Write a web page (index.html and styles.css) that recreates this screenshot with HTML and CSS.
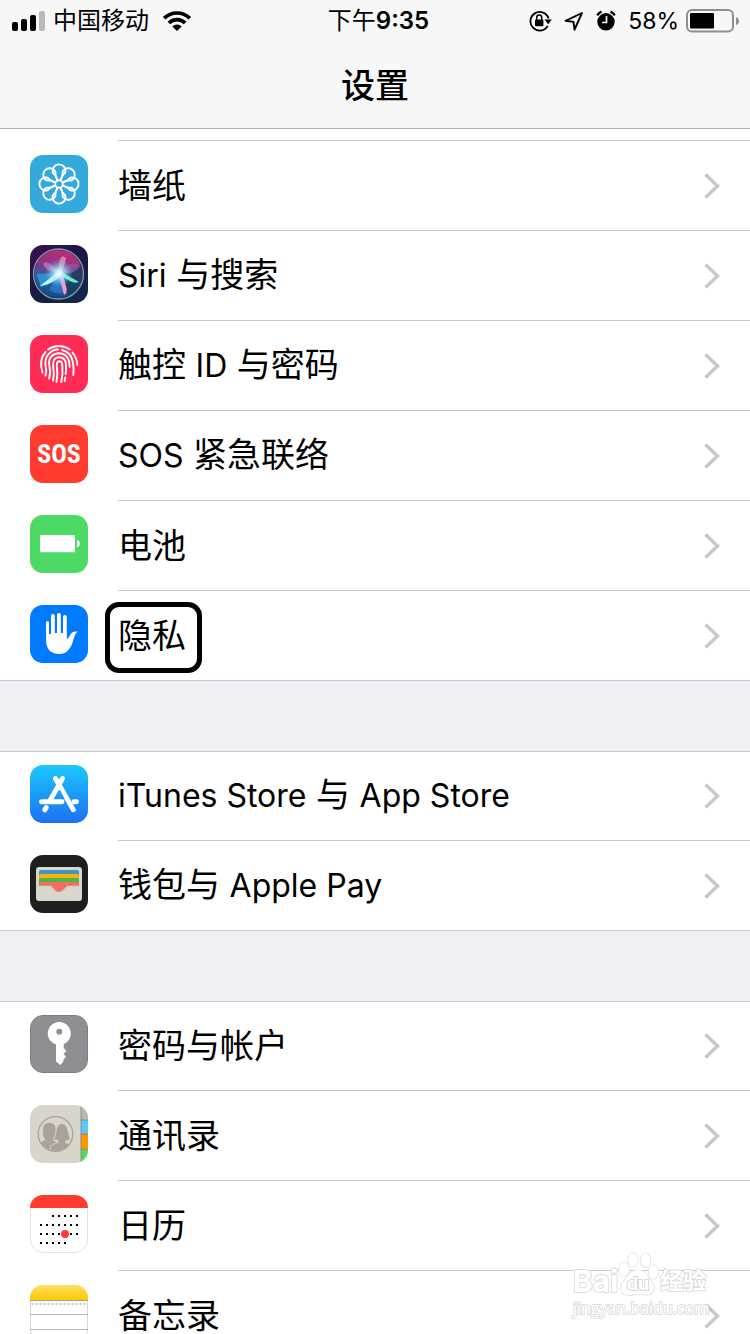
FILE: index.html
```html
<!DOCTYPE html>
<html lang="zh-CN">
<head>
<meta charset="utf-8">
<meta name="viewport" content="width=device-width, initial-scale=1">
<title>设置</title>
<link rel="stylesheet" href="styles.css">
</head>
<body>
<svg class="defs" aria-hidden="true">
  <defs>
    <symbol id="chevron" viewBox="0 0 16 26"><path d="M1.500 1.500 13.500 13 1.500 24.500" fill="none" stroke="#c7c7cc" stroke-width="3.500"/></symbol>
    <path id="petal" d="M-1.600-3.900-3.500-8.400-6.300-11.500A6.500 6.500 0 1 1 6.300-11.500L3.500-8.400 1.600-3.900"/>
  </defs>
</svg>
<div class="screen">
  <header class="header">
    <div class="status">
      <div class="status-side">
        <svg class="signal" width="34" height="22" viewBox="0 0 34 22"><rect x="0" y="12" width="6" height="9" rx="2"/><rect x="9" y="9" width="6" height="12" rx="2"/><rect x="18" y="5" width="6" height="16" rx="2"/><rect x="27" y="1" width="6" height="20" rx="2" fill="#b9b9b9"/></svg>
        <span>中国移动</span>
        <svg class="wifi" width="28" height="22" viewBox="0 0 28 22"><g fill="none" stroke="#000" stroke-width="3.600"><path d="M1.200 8.200a18.200 18.200 0 0 1 25.600 0"/><path d="M5.900 13a11.500 11.500 0 0 1 16.200 0"/></g><path d="M14 21 9.300 16.400a6.700 6.700 0 0 1 9.400 0z"/></svg>
      </div>
      <time class="time">下午<span class="digits">9:35</span></time>
      <div class="status-side status-right">
        <svg width="23" height="22" viewBox="0 0 23 22"><path d="M18.800 15.900A9.300 9.300 0 1 1 19.600 8.500" fill="none" stroke="#000" stroke-width="1.800"/><path d="M15.500 9.500h7.300l-3.600 4.700z"/><rect x="6" y="9.500" width="8.400" height="6.800" rx="1"/><path d="M7.700 10V7.600a2.500 2.500 0 0 1 5 0V10" fill="none" stroke="#000" stroke-width="1.500"/></svg>
        <svg width="20" height="22" viewBox="0 0 20 22"><path d="M18 3 1.500 10.800 9.500 11.900 10.500 19.700z" fill="none" stroke="#000" stroke-width="1.900" stroke-linejoin="round"/></svg>
        <svg width="20" height="22" viewBox="0 0 20 22"><circle cx="10" cy="11.800" r="8.700"/><path d="M1.200 5.300A10 10 0 0 1 5.500 1.600M14.500 1.600a10 10 0 0 1 4.300 3.700" fill="none" stroke="#000" stroke-width="2.400"/><path d="M10.500 6v6.500H6" fill="none" stroke="#f7f7f7" stroke-width="1.700"/></svg>
        <span class="percent">58%</span>
        <svg class="battery" width="53" height="24" viewBox="0 0 53 24"><rect x="1" y="1" width="46" height="21.500" rx="5" fill="none" stroke="#8e8e8e" stroke-width="2"/><rect x="4" y="4" width="24" height="15.500" rx="1"/><path d="M50 8q3 1 3 4t-3 4z" fill="#8e8e8e"/></svg>
      </div>
    </div>
    <h1 class="title">设置</h1>
  </header>
  <main class="list">
    <section class="group group-first">
      <a class="row" href="#"><svg class="icon" viewBox="0 0 58 58"><rect width="58" height="58" rx="13" fill="#34aadc"/><g transform="translate(29 29)" fill="none" stroke="#fff" stroke-width="1.900"><circle r="3.800"/><use href="#petal"/><use href="#petal" transform="rotate(45)"/><use href="#petal" transform="rotate(90)"/><use href="#petal" transform="rotate(135)"/><use href="#petal" transform="rotate(180)"/><use href="#petal" transform="rotate(225)"/><use href="#petal" transform="rotate(270)"/><use href="#petal" transform="rotate(315)"/></g></svg><span class="body"><span class="label">墙纸</span><svg class="chevron"><use href="#chevron"/></svg></span></a>
      <a class="row" href="#"><svg class="icon" viewBox="0 0 58 58">
        <defs>
          <linearGradient id="siriBg" x1="0" y1="0" x2=".7" y2="1"><stop stop-color="#3d0f50"/><stop offset=".5" stop-color="#1d1744"/><stop offset="1" stop-color="#10284a"/></linearGradient>
          <linearGradient id="siriOrb" x1=".6" y1="0" x2=".35" y2="1"><stop stop-color="#d02a73"/><stop offset=".38" stop-color="#8b3382"/><stop offset=".62" stop-color="#2264a5"/><stop offset="1" stop-color="#123d70"/></linearGradient>
          <radialGradient id="siriGlow"><stop stop-color="#fff"/><stop offset=".35" stop-color="#bdf4ff" stop-opacity=".75"/><stop offset="1" stop-color="#50cfff" stop-opacity="0"/></radialGradient>
          <clipPath id="orb"><circle cx="28.500" cy="29" r="24"/></clipPath>
        </defs>
        <rect width="58" height="58" rx="13" fill="url(#siriBg)"/>
        <g clip-path="url(#orb)"><rect width="58" height="58" fill="url(#siriOrb)"/>
          <path d="M29 28 54 18 54 42 40 54z" fill="#153b5b" opacity=".8"/>
          <path d="M29 28C20 16 15 16 13 19c2 6 9 8 16 9z" fill="#d98bc4" opacity=".6"/>
          <path d="M29 28C28 12 32 9 36 13c-1 8-3 12-7 15z" fill="#f0a4c8" opacity=".7"/>
          <path d="M29 28c9-12 18-10 21-7-3 6-12 9-21 7z" fill="#93559d" opacity=".8"/>
          <path d="M29 28 7 29c1 7 4 9 3 13 10-1 16-8 19-14z" fill="#2f9be0" opacity=".8"/>
          <path d="M29 27 19 45q8 5 14 3z" fill="#3a86d8" opacity=".6"/>
          <path d="M29 26 10 41q12-2 21-10z" fill="#c8fff8"/><path d="m28 27 6 23q4-2 2-9l-4-15z" fill="#f59acb"/><path d="m28 25 21 12q-5 2-11-2l-9-5z" fill="#6deebd"/>
          <circle cx="29" cy="28" r="14" fill="url(#siriGlow)"/></g>
        <circle cx="28.500" cy="29" r="25" fill="none" stroke="#849aa9" stroke-width="1.300"/></svg><span class="body"><span class="label"><span class="latin">Siri</span> 与搜索</span><svg class="chevron"><use href="#chevron"/></svg></span></a>
      <a class="row" href="#"><svg class="icon" viewBox="0 0 58 58"><rect width="58" height="58" rx="13" fill="#ff2d55"/><g fill="none" stroke="#fff" stroke-width="1.900" stroke-linecap="round"><path d="M18 14.500Q28.500 7.500 40 14.500"/><path d="M15.500 17Q8.500 25 12.500 37.500"/><path d="M42.500 17.500Q47 23 47.300 30"/><path d="M15.500 40.500Q17 36 15.800 32C13 20 23 14.300 28 14.500"/><path d="M32 15Q41.500 17.500 43 27.500 44 34 43.300 40"/><path d="M19.200 43.500Q21 37 19.400 31C17.500 22 24 18.300 29 18.300 37 18.500 39.500 25 39.700 32 39.800 39 38.800 43.500"/><path d="M23 45.500Q24.500 39 23.200 31.500C22.500 25 25 22.300 29 22.300 33.500 22.300 36 25 36 30Q36.200 36 35.700 39"/><path d="M35.300 42.500 34.700 46"/><path d="M26.500 47Q28 39 26.800 30.500 26.800 26.200 29.500 26.200 32.300 26.200 32.400 31 33 40 31.200 47"/></g></svg><span class="body"><span class="label">触控 <span class="latin">ID</span> 与密码</span><svg class="chevron"><use href="#chevron"/></svg></span></a>
      <a class="row" href="#"><svg class="icon" viewBox="0 0 58 58"><rect width="58" height="58" rx="13" fill="#ff3b30"/><text class="sos" x="29" y="38" text-anchor="middle">SOS</text></svg><span class="body"><span class="label"><span class="latin">SOS</span> 紧急联络</span><svg class="chevron"><use href="#chevron"/></svg></span></a>
      <a class="row" href="#"><svg class="icon" viewBox="0 0 58 58"><rect width="58" height="58" rx="13" fill="#4cd964"/><rect x="10" y="20" width="35" height="17.300" rx=".8" fill="#fff"/><path d="M47 25q3 .5 3 3.600t-3 3.600z" fill="#fff"/></svg><span class="body"><span class="label">电池</span><svg class="chevron"><use href="#chevron"/></svg></span></a>
      <a class="row" href="#"><svg class="icon" viewBox="0 0 58 58"><rect width="58" height="58" rx="13" fill="#007aff"/><path d="M16 17.500a1.500 1.500 0 0 1 3 0V29h2V11a1.900 1.900 0 0 1 3.800 0v17H27V10a1.900 1.900 0 0 1 3.800 0v18H33V12a1.900 1.900 0 0 1 3.800 0v22c2-1 3-3.500 4.200-5.500 1.500-2 4.500-2.500 6.500-1.700-4 3.200-4 11.200-7.500 16.200C37 47.500 33.500 49 29 49c-8 0-12.500-5-12.800-12z" fill="#fff"/></svg><span class="body"><span class="label marked">隐私</span><svg class="chevron"><use href="#chevron"/></svg></span></a>
    </section>
    <section class="group">
      <a class="row" href="#"><svg class="icon" viewBox="0 0 58 58"><defs><linearGradient id="store" x2="0" y2="1"><stop stop-color="#1ac8fc"/><stop offset="1" stop-color="#1d70f2"/></linearGradient></defs><rect width="58" height="58" rx="13" fill="url(#store)"/><g fill="none" stroke="#fff" stroke-width="4.900" stroke-linecap="round"><path d="M32.500 13.500 20 35.500M11.500 36.700H32M44 36.700h2.500M16.200 42.500l-1.500 2.300"/><path d="M25.500 13.500 43.300 44.700"/></g><path d="m29.600 25 4.800 8.800" stroke="#1d95f9" stroke-width=".8"/></svg><span class="body"><span class="label"><span class="latin">iTunes Store</span> 与 <span class="latin">App Store</span></span><svg class="chevron"><use href="#chevron"/></svg></span></a>
      <a class="row" href="#"><svg class="icon" viewBox="0 0 58 58"><rect width="58" height="58" rx="13" fill="#1e1e1e"/><rect x="6" y="12" width="46" height="34" rx="3" fill="#d9d7cb"/><path d="M9 31V17q0-2 2-2h36q2 0 2 2v14z" fill="#3e95c7"/><path d="M9 31V21q0-2 2-2h36q2 0 2 2v10z" fill="#ffb000"/><path d="M9 31v-6q0-2 2-2h36q2 0 2 2v6z" fill="#4bb546"/><path d="M9 31v-2q0-2 2-2h36q2 0 2 2v2H38c-3 0-4 6-9 6s-6-6-9-6z" fill="#f26d5f"/><path d="M6 30.700h14c3 0 4 6 9 6s6-6 9-6h14" fill="none" stroke="#b9b7ac" stroke-width=".6"/></svg><span class="body"><span class="label">钱包与 <span class="latin">Apple Pay</span></span><svg class="chevron"><use href="#chevron"/></svg></span></a>
    </section>
    <section class="group">
      <a class="row" href="#"><svg class="icon" viewBox="0 0 58 58"><rect x=".5" y=".5" width="57" height="57" rx="12.500" fill="#8e8e93" stroke="#7f7f83"/><path d="M26 29.500a11.500 11.500 0 1 1 7.700-.4v3.900l2.800 3-3 3 2.700 3-2.700 2.300v2L30.500 50 26 46.500z" fill="#fff"/><circle cx="29.300" cy="16.700" r="3" fill="#8e8e93"/></svg><span class="body"><span class="label">密码与帐户</span><svg class="chevron"><use href="#chevron"/></svg></span></a>
      <a class="row" href="#"><svg class="icon" viewBox="0 0 58 58"><defs><clipPath id="tile"><rect width="58" height="58" rx="13"/></clipPath><clipPath id="disc"><circle cx="25.500" cy="29" r="17"/></clipPath></defs><g clip-path="url(#tile)"><path fill="#d8d5cc" d="M0 0h58v58H0z"/><path fill="#bdb9b0" d="M51 0h7v15h-7z"/><path fill="#5ac8fa" d="M51 15h7v14h-7z"/><path fill="#ff9500" d="M51 29h7v15h-7z"/><path fill="#4cd964" d="M51 45h7v13h-7z"/><path d="M51 0v58M51 15h7M51 29h7M51 44.500h7" stroke="#817e76" stroke-width=".8"/></g><circle cx="25.500" cy="29" r="17.300" fill="none" stroke="#a9a299" stroke-width="1.300"/><g clip-path="url(#disc)" fill="#a9a299"><path d="M24 34.500c2-3 1.500-15 7.500-15.500 7 0 6 10 8.500 15-2 1.500-5 1-5 3 1 2 5 2 7 4v9H18v-9c2-3 10-2 11-5 0-1-3-1-5-1.500z"/><path stroke="#d8d5cc" stroke-width="1" d="M5 49V39c3-2 9-2 9.500-5-2-3-2.500-5-2-10 .5-5 3.500-6.500 7-6.500s6.500 2 6.500 7c0 4-.5 6-2.500 9 0 3 3 3 4.500 4-2 1-8 2-8 7v5z"/></g></svg><span class="body"><span class="label">通讯录</span><svg class="chevron"><use href="#chevron"/></svg></span></a>
      <a class="row" href="#"><svg class="icon" viewBox="0 0 58 58"><rect x=".5" y=".5" width="57" height="57" rx="12.500" fill="#fff" stroke="#e2e2e2"/><path d="M0 13A13 13 0 0 1 13 0h32a13 13 0 0 1 13 13z" fill="#ff3b30"/><path d="M22 21h26M10 30h38M10 39h38M10 48h26" stroke="#000" stroke-width="2" stroke-dasharray="2 4"/><circle cx="35" cy="39" r="4" fill="#ff3b30"/></svg><span class="body"><span class="label">日历</span><svg class="chevron"><use href="#chevron"/></svg></span></a>
      <a class="row" href="#"><svg class="icon" viewBox="0 0 58 58"><defs><linearGradient id="note" x2="0" y2="1"><stop stop-color="#ffdf63"/><stop offset="1" stop-color="#fdc800"/></linearGradient></defs><rect x=".5" y=".5" width="57" height="57" rx="12.500" fill="#fff" stroke="#d6d6d6"/><path d="M0 15v-2A13 13 0 0 1 13 0h32a13 13 0 0 1 13 13v2z" fill="url(#note)"/><path d="M0 15.500h58" stroke="#a6a08c"/><path d="M1.500 19h55" stroke="#c7c7c7" stroke-width="2" stroke-dasharray="2 2"/><path d="M0 29.500h58M0 44.500h58" stroke="#b7b7b7"/></svg><span class="body"><span class="label">备忘录</span><svg class="chevron"><use href="#chevron"/></svg></span></a>
    </section>
  </main>
  <div class="watermark">
    <div class="brand"><span>Bai</span><svg width="42" height="46" viewBox="0 0 42 46"><g fill="#fff" stroke="#d8d8d8" stroke-width="1.200"><ellipse cx="15" cy="8.500" rx="5" ry="7"/><ellipse cx="27.500" cy="9" rx="5" ry="7"/><ellipse cx="6" cy="18" rx="5" ry="7"/><ellipse cx="35.500" cy="21" rx="5" ry="7"/><path d="M20 19c8 0 9 7 14 12 4 5 2 12-5 13-4 0-6-1-9-1s-6 2-11 1c-7-1-8-9-4-13 5-5 7-12 15-12z"/></g><text class="paw-text" x="20" y="39" text-anchor="middle">du</text></svg><span class="brand-cn">经验</span></div>
    <div class="site">jingyan.baidu.com</div>
  </div>
</div>
</body>
</html>
```
FILE: styles.css
```css
* {
  box-sizing: border-box;
}

body {
  margin: 0;
  background: #fff;
  color: #000;
  font-family: Inter, "Noto Sans CJK SC", sans-serif;
}

.defs {
  position: absolute;
  width: 0;
  height: 0;
}

.screen {
  position: relative;
  display: flex;
  flex-direction: column;
  height: 100vh;
  overflow: hidden;
}

.header {
  background: #f7f7f7;
  border-bottom: 1px solid #b2b2b2;
}

.status {
  display: grid;
  grid-template-columns: 1fr auto 1fr;
  align-items: center;
  height: 40px;
  padding: 0 11px 0 12px;
  font-size: 24px;
  line-height: 42px;
}

.status-side {
  display: flex;
  align-items: center;
}

.signal {
  margin-right: 7px;
}

.wifi {
  margin-left: 14px;
}

.time {
  padding-left: 6px;
}

.digits {
  font-weight: 600;
}

.status-right {
  justify-content: flex-end;
  gap: 12px;
}

.percent {
  font-size: 23px;
}

.battery {
  margin-left: -5px;
}

.title {
  margin: 0;
  height: 88px;
  font-size: 34px;
  font-weight: 500;
  line-height: 92px;
  text-align: center;
}

.list {
  flex: 1;
  min-height: 0;
  overflow-y: auto;
  scrollbar-width: none;
  background: #efeff4;
}

.group {
  margin-bottom: 70px;
  border-top: 1px solid #c8c7cc;
  border-bottom: 1px solid #c8c7cc;
  background: #fff;
}

.group-first {
  padding-top: 11px;
  border-top: 0;
}

.row {
  display: flex;
  height: 90px;
  padding-left: 30px;
  color: inherit;
  text-decoration: none;
}

.icon {
  flex: none;
  width: 58px;
  height: 58px;
  margin-top: 15px;
}

.body {
  display: flex;
  flex: 1;
  align-items: center;
  justify-content: space-between;
  margin-left: 30px;
  padding-right: 30px;
  border-top: 1px solid #c8c7cc;
}

.group:not(.group-first) .row:first-child {
  height: 88px;
}

.group:not(.group-first) .row:first-child .icon {
  margin-top: 13px;
}

.group:not(.group-first) .row:first-child .body {
  padding-bottom: 1px;
  border-top: 0;
}

.label {
  font-size: 34px;
  line-height: 48px;
}

.latin {
  font-size: 32px;
}

.marked {
  margin-top: 3px;
  margin-left: -13px;
  padding: 5px 11px 8px 8px;
  border: 5px solid #000;
  border-radius: 14px;
}

.chevron {
  width: 16px;
  height: 26px;
}

.sos {
  fill: #fff;
  font-family: "Liberation Sans Narrow", "Roboto Condensed", Roboto, sans-serif;
  font-size: 26px;
  font-weight: 700;
}

.watermark {
  position: absolute;
  right: 41px;
  bottom: 15px;
  color: #fff;
  -webkit-text-stroke: 2px #dedede;
  paint-order: stroke fill;
}

.brand {
  display: flex;
  align-items: flex-end;
  font-size: 30px;
  font-weight: 700;
  line-height: 32px;
}

.brand-cn {
  font-size: 23px;
}

.paw-text {
  fill: #fff;
  stroke: #d8d8d8;
  stroke-width: 2px;
  font-size: 18px;
}

.site {
  font-family: "Open Sans", "Noto Sans", sans-serif;
  font-size: 16px;
  line-height: 22px;
}
```
